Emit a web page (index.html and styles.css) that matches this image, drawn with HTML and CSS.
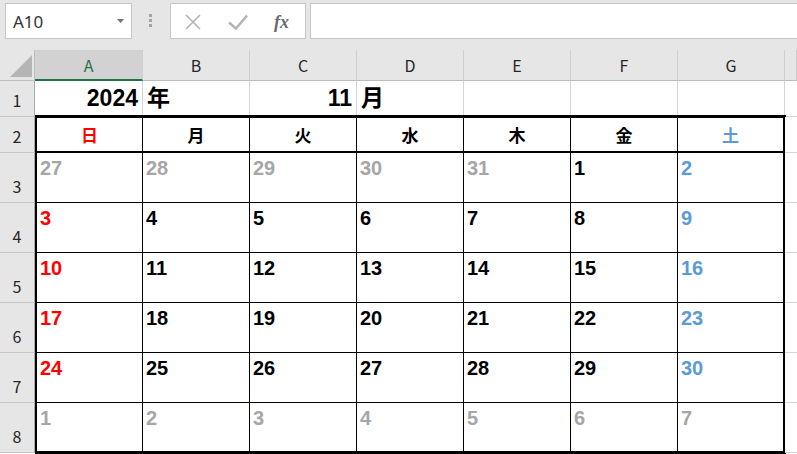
FILE: index.html
```html
<!DOCTYPE html>
<html lang="ja">
<head>
<meta charset="utf-8">
<title>カレンダー</title>
<link rel="stylesheet" href="styles.css">
</head>
<body>
<div class="toolbar">
  <div class="namebox">
    <span class="ref">A10</span>
    <svg class="drop" width="7" height="4" viewBox="0 0 7 4"><polygon points="0,0 7,0 3.5,4" fill="#707070"/></svg>
  </div>
  <svg class="grip" width="38" height="36" viewBox="0 0 38 36"><rect x="17" y="11" width="3" height="3" fill="#a3a3a3"/><rect x="17" y="16" width="3" height="3" fill="#a3a3a3"/><rect x="17" y="21" width="3" height="3" fill="#a3a3a3"/></svg>
  <div class="fxbox">
    <svg class="ico-x" width="18" height="18" viewBox="0 0 18 18"><path d="M2 2 L16 16 M16 2 L2 16" stroke="#b5b5b5" stroke-width="1.7" fill="none"/></svg>
    <svg class="ico-ok" width="20" height="16" viewBox="0 0 20 16"><path d="M1 8.5 L8 14.5 L19 1.5" stroke="#b5b5b5" stroke-width="2.6" fill="none"/></svg>
    <span class="fx">fx</span>
  </div>
  <div class="formula"></div>
</div>

<div class="sheet">
  <div class="corner"><svg width="34" height="30" viewBox="0 0 34 30"><polygon points="32,5 32,27 10,27" fill="#b5b5b5"/></svg></div>
  <div class="ch sel">A</div>
  <div class="ch">B</div>
  <div class="ch">C</div>
  <div class="ch">D</div>
  <div class="ch">E</div>
  <div class="ch">F</div>
  <div class="ch">G</div>
  <div class="ch"></div>

  <div class="rh">1</div>
  <div class="c right big">2024</div>
  <div class="c big">年</div>
  <div class="c right big">11</div>
  <div class="c big">月</div>
  <div class="c"></div>
  <div class="c"></div>
  <div class="c"></div>
  <div class="c hcol"></div>

  <div class="rh">2</div>
  <div class="cal">
    <div class="d dh sun">日</div>
    <div class="d dh">月</div>
    <div class="d dh">火</div>
    <div class="d dh">水</div>
    <div class="d dh">木</div>
    <div class="d dh">金</div>
    <div class="d dh sat">土</div>

    <div class="d gray">27</div>
    <div class="d gray">28</div>
    <div class="d gray">29</div>
    <div class="d gray">30</div>
    <div class="d gray">31</div>
    <div class="d">1</div>
    <div class="d sat">2</div>

    <div class="d sun">3</div>
    <div class="d">4</div>
    <div class="d">5</div>
    <div class="d">6</div>
    <div class="d">7</div>
    <div class="d">8</div>
    <div class="d sat">9</div>

    <div class="d sun">10</div>
    <div class="d">11</div>
    <div class="d">12</div>
    <div class="d">13</div>
    <div class="d">14</div>
    <div class="d">15</div>
    <div class="d sat">16</div>

    <div class="d sun">17</div>
    <div class="d">18</div>
    <div class="d">19</div>
    <div class="d">20</div>
    <div class="d">21</div>
    <div class="d">22</div>
    <div class="d sat">23</div>

    <div class="d sun">24</div>
    <div class="d">25</div>
    <div class="d">26</div>
    <div class="d">27</div>
    <div class="d">28</div>
    <div class="d">29</div>
    <div class="d sat">30</div>

    <div class="d gray">1</div>
    <div class="d gray">2</div>
    <div class="d gray">3</div>
    <div class="d gray">4</div>
    <div class="d gray">5</div>
    <div class="d gray">6</div>
    <div class="d gray">7</div>
  </div>
  <div class="c hcol"></div>

  <div class="rh">3</div>
  <div class="c hcol"></div>
  <div class="rh">4</div>
  <div class="c hcol"></div>
  <div class="rh">5</div>
  <div class="c hcol"></div>
  <div class="rh">6</div>
  <div class="c hcol"></div>
  <div class="rh">7</div>
  <div class="c hcol"></div>
  <div class="rh">8</div>
  <div class="c hcol"></div>
</div>
</body>
</html>
```

FILE: styles.css
```css
html, body {
  margin: 0;
  padding: 0;
}
body {
  width: 797px;
  height: 454px;
  overflow: hidden;
  background: #ffffff;
  font-family: "Noto Sans CJK JP", "Noto Sans", sans-serif;
  color: #000;
}

/* ---------- toolbar ---------- */
.toolbar {
  height: 50px;
  box-sizing: border-box;
  background: #e6e6e6;
  display: flex;
  align-items: flex-start;
  padding: 3px 0 0 5px;
}
.namebox {
  width: 127px;
  height: 36px;
  box-sizing: border-box;
  border: 1px solid #c6c6c6;
  background: #fff;
  display: flex;
  align-items: center;
  justify-content: space-between;
  padding: 2px 7px 0 7px;
}
.ref {
  font-family: "Noto Sans", sans-serif;
  font-size: 17px;
  line-height: 20px;
  color: #333;
}
.drop {
  margin-bottom: 2px;
}
.grip {
  flex: none;
}
.fxbox {
  width: 136px;
  height: 36px;
  box-sizing: border-box;
  border: 1px solid #c6c6c6;
  background: #fff;
  display: flex;
  align-items: center;
  padding: 1px 0 0 13px;
}
.ico-x {
  flex: none;
}
.ico-ok {
  flex: none;
  margin-left: 26px;
}
.fx {
  margin-left: 26px;
  font-family: "Liberation Serif", serif;
  font-style: italic;
  font-weight: bold;
  font-size: 18px;
  line-height: 20px;
  color: #6a6a6a;
}
.formula {
  flex: 1;
  height: 36px;
  box-sizing: border-box;
  margin-left: 4px;
  border: 1px solid #c6c6c6;
  border-right: none;
  background: #fff;
}

/* ---------- sheet grid ---------- */
.sheet {
  display: grid;
  grid-template-columns: 35px 108px repeat(6, 107px) 1fr;
  grid-template-rows: 31px 36px 36px repeat(6, 50px);
}
.sheet > div {
  box-sizing: border-box;
}
.corner {
  background: #e6e6e6;
  border-right: 1px solid #bdbdbd;
  border-bottom: 1px solid #bdbdbd;
}
.corner svg {
  display: block;
}
.ch {
  background: #e6e6e6;
  border-right: 1px solid #cfcfcf;
  border-bottom: 1px solid #bdbdbd;
  display: flex;
  align-items: center;
  justify-content: center;
  font-size: 16px;
  line-height: 20px;
  color: #262626;
}
.ch.sel {
  background: #d2d2d2;
  color: #217346;
  border-bottom: 2px solid #217346;
}
.rh {
  grid-column: 1;
  background: #e6e6e6;
  border-right: 1px solid #ababab;
  border-bottom: 1px solid #c6c6c6;
  display: flex;
  align-items: flex-end;
  justify-content: center;
  padding-bottom: 6px;
  font-size: 16px;
  line-height: 20px;
  color: #262626;
}
.c {
  background: #fff;
  border-right: 1px solid #d4d4d4;
  border-bottom: 1px solid #d4d4d4;
}
.hcol {
  grid-column: 9;
  border-right: none;
}
.big {
  display: flex;
  align-items: flex-end;
  padding: 0 4px 6px 4px;
  font-family: "Liberation Sans", "Noto Sans CJK JP", sans-serif;
  font-weight: bold;
  font-size: 23px;
  line-height: 24px;
}
.right {
  justify-content: flex-end;
}

/* ---------- calendar block ---------- */
.cal {
  grid-column: 2 / 9;
  grid-row: 3 / 10;
  margin: -2px -1px -1px 0;
  border-style: solid;
  border-color: #000;
  border-width: 3px 3px 3px 2px;
  background: #fff;
  display: grid;
  grid-template-columns: 106px repeat(5, 107px) 105px;
  grid-template-rows: 35px repeat(5, 50px) 48px;
}
.d {
  box-sizing: border-box;
  border-right: 1px solid #000;
  border-bottom: 1px solid #000;
  padding: 5px 0 0 3px;
  font-family: "Liberation Sans", sans-serif;
  font-weight: bold;
  font-size: 20px;
  line-height: 20px;
}
.d:nth-child(7n) {
  border-right: none;
}
.d:nth-child(n+43) {
  border-bottom: none;
}
.dh {
  border-bottom: 2px solid #000;
  padding: 0;
  display: flex;
  align-items: center;
  justify-content: center;
  font-family: "Noto Sans CJK JP", sans-serif;
  font-size: 17px;
  line-height: 20px;
}
.sun {
  color: #ff0000;
}
.sat {
  color: #5b9bd5;
}
.gray {
  color: #a6a6a6;
}
```
